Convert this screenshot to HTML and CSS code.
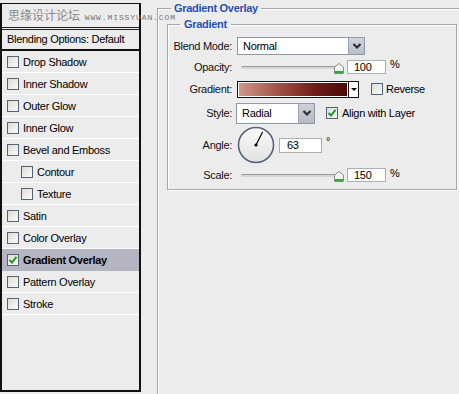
FILE: index.html
```html
<!DOCTYPE html>
<html lang="en">
<head>
  <meta charset="UTF-8" />
  <meta name="viewport" content="width=device-width, initial-scale=1.0" />
  <title>Layer Style - Gradient Overlay</title>
  <link rel="stylesheet" href="styles.css">
</head>
<body>

  <div class="dialog">

    <div class="styles-panel">
      <div class="panel-head"></div>
      <div class="blend-opts">Blending Options: Default</div>
      <ul class="fx-list">
        <li><span class="cb"></span>Drop Shadow</li>
        <li><span class="cb"></span>Inner Shadow</li>
        <li><span class="cb"></span>Outer Glow</li>
        <li><span class="cb"></span>Inner Glow</li>
        <li><span class="cb"></span>Bevel and Emboss</li>
        <li class="sub"><span class="cb"></span>Contour</li>
        <li class="sub"><span class="cb"></span>Texture</li>
        <li><span class="cb"></span>Satin</li>
        <li><span class="cb"></span>Color Overlay</li>
        <li class="active">
          <span class="cb">
            <svg width="10" height="10" viewBox="0 0 10 10"><path d="M1.5 5 L4 7.5 L8.5 1.8" fill="none" stroke="#1f9a1f" stroke-width="2"/></svg>
          </span>Gradient Overlay
        </li>
        <li><span class="cb"></span>Pattern Overlay</li>
        <li><span class="cb"></span>Stroke</li>
      </ul>
    </div>

    <fieldset class="fx-frame">
      <legend>Gradient Overlay</legend>

      <fieldset class="group">
        <legend>Gradient</legend>

        <div class="form">
          <label>Blend Mode:</label>
          <div class="ctl">
            <div class="select blend">
              <span>Normal</span>
              <span class="drop">
                <svg width="10" height="8" viewBox="0 0 10 8"><path d="M1.5 2 L5 5.5 L8.5 2" fill="none" stroke="#2b2b3a" stroke-width="2.2"/></svg>
              </span>
            </div>
          </div>

          <label>Opacity:</label>
          <div class="ctl">
            <div class="slider">
              <span class="track"></span>
              <svg class="thumb" width="10" height="11" viewBox="0 0 10 11"><path d="M0.5 4 L5 0.5 L9.5 4 L9.5 10.5 L0.5 10.5 Z" fill="#f2f2f2" stroke="#8c8c8c"/><rect x="1" y="8" width="8" height="2.5" fill="#3aa63a"/></svg>
            </div>
            <div class="num">100</div>
            <span class="unit">%</span>
          </div>

          <label>Gradient:</label>
          <div class="ctl">
            <div class="swatch">
              <span class="grad"></span>
              <span class="tri"></span>
            </div>
            <span class="cb"></span>
            <span class="cb-text">Reverse</span>
          </div>

          <label>Style:</label>
          <div class="ctl">
            <div class="select style">
              <span>Radial</span>
              <span class="drop">
                <svg width="10" height="8" viewBox="0 0 10 8"><path d="M1.5 2 L5 5.5 L8.5 2" fill="none" stroke="#2b2b3a" stroke-width="2.2"/></svg>
              </span>
            </div>
            <span class="cb">
              <svg width="10" height="10" viewBox="0 0 10 10"><path d="M1.5 5 L4 7.5 L8.5 1.8" fill="none" stroke="#1f9a1f" stroke-width="2"/></svg>
            </span>
            <span class="cb-text">Align with Layer</span>
          </div>

          <label>Angle:</label>
          <div class="ctl">
            <svg class="dial" width="38" height="38" viewBox="0 0 38 38">
              <defs>
                <linearGradient id="dialfill" x1="0" y1="0" x2="0" y2="1">
                  <stop offset="0" stop-color="#fafafa"/>
                  <stop offset="1" stop-color="#e2e2e2"/>
                </linearGradient>
              </defs>
              <circle cx="19" cy="19" r="17.5" fill="url(#dialfill)" stroke="#56637a" stroke-width="1.6"/>
              <line x1="19" y1="19" x2="25.6" y2="6" stroke="#000" stroke-width="1.2"/>
              <circle cx="19" cy="19" r="1.6" fill="#000"/>
            </svg>
            <div class="num angle">63</div>
            <span class="deg">°</span>
          </div>

          <label>Scale:</label>
          <div class="ctl">
            <div class="slider">
              <span class="track"></span>
              <svg class="thumb" width="10" height="11" viewBox="0 0 10 11"><path d="M0.5 4 L5 0.5 L9.5 4 L9.5 10.5 L0.5 10.5 Z" fill="#f2f2f2" stroke="#8c8c8c"/><rect x="1" y="8" width="8" height="2.5" fill="#3aa63a"/></svg>
            </div>
            <div class="num">150</div>
            <span class="unit">%</span>
          </div>
        </div>
      </fieldset>
    </fieldset>

    <div class="watermark">思缘设计论坛 <span>WWW.MISSYUAN.COM</span></div>
  </div>

</body>
</html>
```

FILE: styles.css
```css
* {
  box-sizing: border-box;
}

body {
  margin: 0;
  padding: 0;
  background: #ececec;
  font-family: "Liberation Sans", Arial, sans-serif;
  font-size: 11px;
  letter-spacing: -0.3px;
  color: #000;
  overflow: hidden;
  height: 394px;
}

.dialog {
  display: flex;
  align-items: flex-start;
  position: relative;
  height: 394px;
}

/* left list of effects */
.styles-panel {
  width: 141px;
  height: 389px;
  margin-top: 3px;
  margin-left: 0;
  border: 2px solid #111;
  border-top-width: 1px;
  background: #ececec;
  flex-shrink: 0;
}

.panel-head {
  height: 24px;
  border-bottom: 1px solid #222;
}

.blend-opts {
  border-top: 1px solid #222;
  margin-top: 1px;
  height: 22px;
  line-height: 19px;
  padding-left: 5px;
  border-bottom: 2px solid #111;
}

.fx-list {
  list-style: none;
  margin: 0;
  padding: 0;
}

.fx-list li {
  height: 22px;
  border-bottom: 1px solid #fff;
  display: flex;
  align-items: center;
  padding-left: 5px;
}

.fx-list li.sub {
  padding-left: 19px;
}

.fx-list li.active {
  background: #b4b4c2;
  font-weight: bold;
  border-bottom-color: #b4b4c2;
}

.cb {
  width: 12px;
  height: 12px;
  border: 1px solid #50637a;
  background: linear-gradient(135deg, #dcdcd6, #fbfbfb);
  display: inline-flex;
  align-items: center;
  justify-content: center;
  margin-right: 4px;
  flex-shrink: 0;
}

/* right side frame */
.fx-frame {
  flex: 1;
  min-width: 0;
  margin: 1px 0 0 16px;
  padding: 0;
  height: 400px;
  border: none;
  border-top: 1px solid #a6a6a6;
  border-left: 1px solid #a6a6a6;
  box-shadow: inset 1px 1px 0 #fff;
}

legend {
  color: #1f4fb8;
  font-weight: bold;
  line-height: 14px;
  padding: 0 3px;
}

.fx-frame > legend {
  margin-left: 13px;
}

.group {
  width: 290px;
  margin: 2px 0 0 9px;
  padding: 5px 0 3px 0;
  border: 1px solid #a6a6a6;
  box-shadow: inset 1px 1px 0 #fff, 1px 1px 0 #fff;
}

.group > legend {
  margin-left: 12px;
  padding: 0 4px;
}

.form {
  display: grid;
  grid-template-columns: 64px auto;
  grid-template-rows: 19px 23px 22px 26px 38px 22px;
  column-gap: 5px;
  align-items: center;
}

.form label {
  text-align: right;
  color: #111;
}

.ctl {
  display: flex;
  align-items: center;
}

.select {
  display: flex;
  align-items: stretch;
  background: #fff;
  border: 1px solid #8c98a8;
}

.select span:first-child {
  flex: 1;
  padding-left: 5px;
  display: flex;
  align-items: center;
}

.select .drop {
  width: 16px;
  background: linear-gradient(#d2d5e0, #b9bccb);
  border-left: 1px solid #9aa3b4;
  display: flex;
  align-items: center;
  justify-content: center;
}

.select.blend {
  width: 128px;
  height: 18px;
}

.select.style {
  width: 79px;
  height: 21px;
  margin-left: -1px;
}

.select.style .drop {
  background: linear-gradient(#cfd0d6, #b8b9c2);
}

.slider {
  width: 107px;
  height: 14px;
  position: relative;
}

.slider .track {
  position: absolute;
  left: 4px;
  right: 4px;
  top: 6px;
  height: 3px;
  border-radius: 2px;
  background: #d6d6d6;
  border-top: 1px solid #9a9a9a;
}

.slider .thumb {
  position: absolute;
  right: 0;
  top: 3px;
}

.num {
  width: 39px;
  height: 14px;
  margin-left: 3px;
  background: #fff;
  border: 1px solid #a9b0ba;
  padding-left: 6px;
  line-height: 12px;
}

.unit {
  margin-left: 4px;
  margin-top: -5px;
}

.swatch {
  width: 122px;
  height: 17px;
  border: 1px solid #111;
  display: flex;
  background: #fff;
}

.swatch .grad {
  flex: 1;
  margin: 1px;
  background: linear-gradient(to right, #d1978a, #a3544a 35%, #6e1d18 70%, #4a0a0a);
}

.swatch .tri {
  width: 10px;
  border-left: 1px solid #111;
  display: flex;
  align-items: center;
  justify-content: center;
}

.swatch .tri::after {
  content: "";
  border-left: 3px solid transparent;
  border-right: 3px solid transparent;
  border-top: 3px solid #000;
}

.swatch + .cb {
  margin-left: 12px;
  margin-right: 3px;
}

.select.style + .cb {
  margin-left: 11px;
  margin-right: 4px;
}

.dial {
  display: block;
}

.num.angle {
  width: 43px;
  height: 15px;
  margin-left: 4px;
  padding-left: 7px;
  line-height: 13px;
}

.deg {
  margin-left: 4px;
  margin-top: -8px;
}

.watermark {
  position: absolute;
  top: 7px;
  left: 8px;
  color: #8a8a8a;
  font-family: "Noto Sans CJK SC", sans-serif;
  font-size: 12px;
  line-height: 16px;
  letter-spacing: 0;
  white-space: nowrap;
}

.watermark span {
  font-family: "Liberation Mono", monospace;
  font-size: 8px;
  letter-spacing: 0.9px;
  color: #777;
  margin-left: 2px;
}
```
